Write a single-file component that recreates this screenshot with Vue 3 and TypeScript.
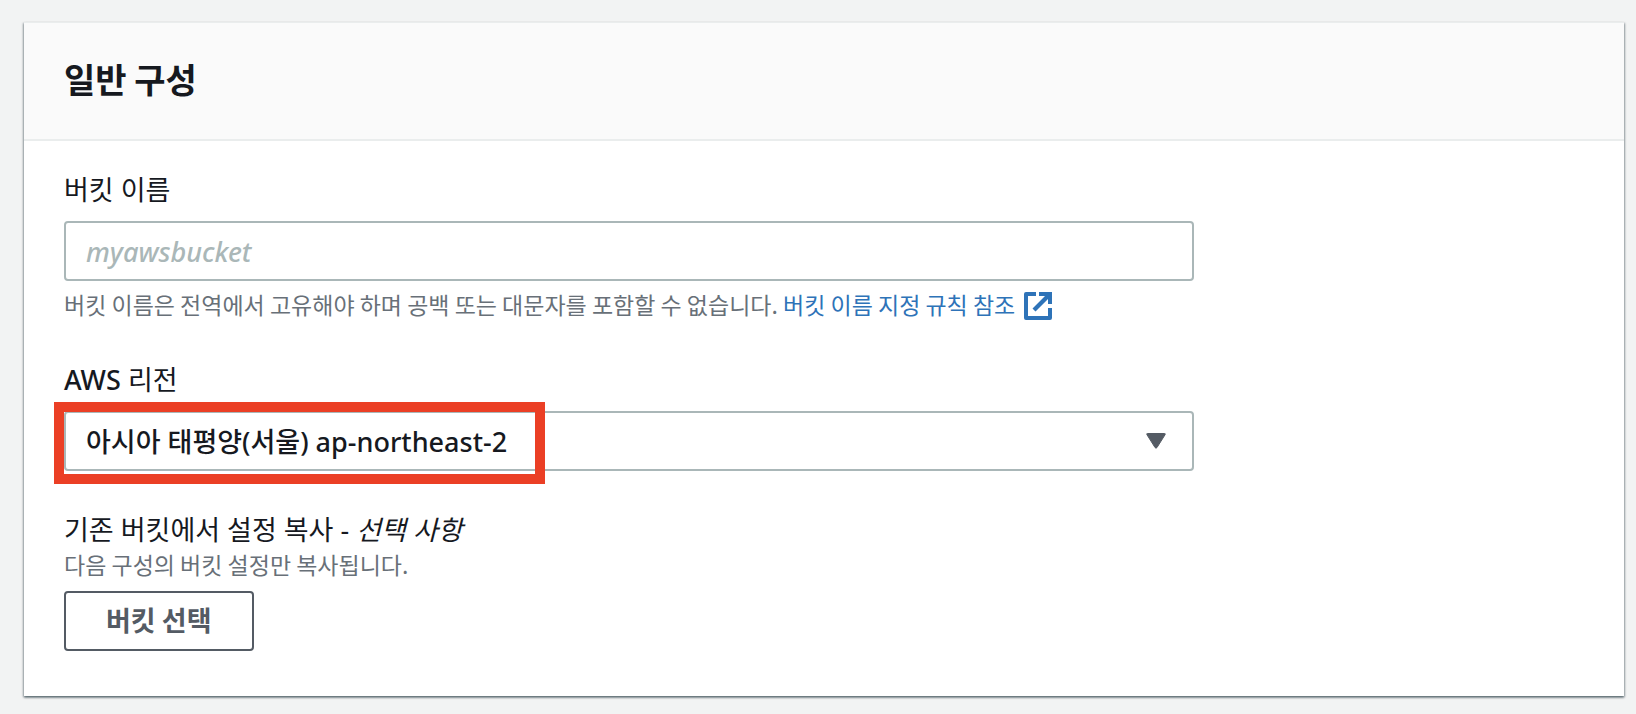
<script setup lang="ts">
import { ref } from 'vue'

interface Region {
  id: string
  name: string
}

const bucketName = ref('')
const regions: Region[] = [{ id: 'ap-northeast-2', name: '아시아 태평양(서울)' }]
const region = ref(regions[0].id)
</script>

<template>
  <main class="page">
    <section class="card" aria-labelledby="general-title">
      <header class="card-header">
        <h2 id="general-title">일반 구성</h2>
      </header>
      <form class="card-body" @submit.prevent>
        <div class="field">
          <label class="label" for="bucket-name">버킷 이름</label>
          <input
            id="bucket-name"
            v-model="bucketName"
            class="control"
            type="text"
            placeholder="myawsbucket"
            aria-describedby="bucket-hint"
          />
          <p id="bucket-hint" class="hint hint-below">
            버킷 이름은 전역에서 고유해야 하며 공백 또는 대문자를 포함할 수 없습니다.
            <a class="link" href="#naming-rules">버킷 이름 지정 규칙 참조<svg class="external" viewBox="0 0 28 28" aria-hidden="true">
              <path d="M12 2H2v24h24V16" fill="none" stroke="currentColor" stroke-width="4" stroke-linejoin="round" />
              <path d="M15 0h13v12h-4V7L11.500 19.500l-3-3L21 4h-6z" fill="currentColor" />
            </svg></a>
          </p>
        </div>

        <div class="field">
          <label class="label" for="region"><span class="latin">AWS</span> 리전</label>
          <div class="select-wrap">
            <select id="region" v-model="region" class="control select">
              <option v-for="r in regions" :key="r.id" :value="r.id">{{ r.name }} {{ r.id }}</option>
            </select>
            <svg class="caret" viewBox="0 0 20 16" aria-hidden="true">
              <path d="M1.500.5h17q1.300 0 .5 1.300L11 14.500q-1 1.300-2 0L1 1.800Q.2.500 1.500.5z" fill="currentColor" stroke="currentColor" />
            </svg>
            <span class="highlight" aria-hidden="true"></span>
          </div>
        </div>

        <div class="field">
          <span id="copy-label" class="label flush">기존 버킷에서 설정 복사 - <i>선택 사항</i></span>
          <p id="copy-hint" class="hint">다음 구성의 버킷 설정만 복사됩니다.</p>
          <button class="button" type="button" aria-describedby="copy-label copy-hint">버킷 선택</button>
        </div>
      </form>
    </section>
  </main>
</template>

<style>
body {
  margin: 0;
  background: #f2f3f3;
}
</style>

<style scoped>
.page {
  padding: 22px 12px 18px 24px;
  font-family: 'Noto Sans', 'Noto Sans CJK KR', sans-serif;
  font-size: 27px;
  color: #16191f;
}
.card {
  background: #fff;
  border-top: 1px solid #eaeded;
  box-shadow: 0 2px 2px 0 rgba(0, 28, 36, 0.3), 1px 1px 2px 0 rgba(0, 28, 36, 0.3), -1px 1px 2px 0 rgba(0, 28, 36, 0.3);
}
.card-header {
  padding: 32px 40px 36px;
  background: #fafafa;
  border-bottom: 2px solid #eaeded;
}
h2 {
  margin: 0;
  font-family: 'Noto Sans CJK KR', sans-serif;
  font-size: 34px;
  line-height: 48px;
  font-weight: 700;
}
.card-body {
  padding: 30px 40px 45px;
  display: flex;
  flex-direction: column;
  gap: 40px;
}
.label {
  display: block;
  margin-bottom: 12px;
  line-height: 38px;
}
.latin {
  font-weight: 500;
}
.flush {
  margin-bottom: 0;
}
.control {
  display: block;
  box-sizing: border-box;
  width: calc(75% - 10px);
  height: 60px;
  padding: 0 20px;
  border: 2px solid #aab7b8;
  border-radius: 4px;
  background: #fff;
  color: inherit;
  font: inherit;
  font-weight: 500;
}
.control::placeholder {
  color: #aab7b8;
  font-style: italic;
  opacity: 1;
}
.hint {
  margin: 0 0 12px;
  font-family: 'Noto Sans CJK KR', sans-serif;
  font-size: 23px;
  line-height: 30px;
  color: #687078;
}
.hint-below {
  margin: 8px 0 2px;
}
.link {
  color: #2e73b8;
  text-decoration: none;
}
.external {
  width: 28px;
  height: 28px;
  margin: -4px 0 -4px 9px;
  vertical-align: -2px;
}
.select-wrap {
  position: relative;
}
.select {
  appearance: none;
}
.caret {
  position: absolute;
  top: 22px;
  right: calc(25% + 38px);
  width: 20px;
  height: 16px;
  color: #545b64;
  pointer-events: none;
}
.highlight {
  position: absolute;
  box-sizing: border-box;
  top: -9px;
  left: -10px;
  width: 491px;
  height: 82px;
  border: 10px solid #eb3f25;
  pointer-events: none;
}
.button {
  display: block;
  box-sizing: border-box;
  height: 60px;
  padding: 0 40px 4px;
  border: 2px solid #545b64;
  border-radius: 4px;
  background: #fff;
  color: #545b64;
  font-family: 'Noto Sans CJK KR', sans-serif;
  font-size: 27px;
  font-weight: 700;
}
</style>
